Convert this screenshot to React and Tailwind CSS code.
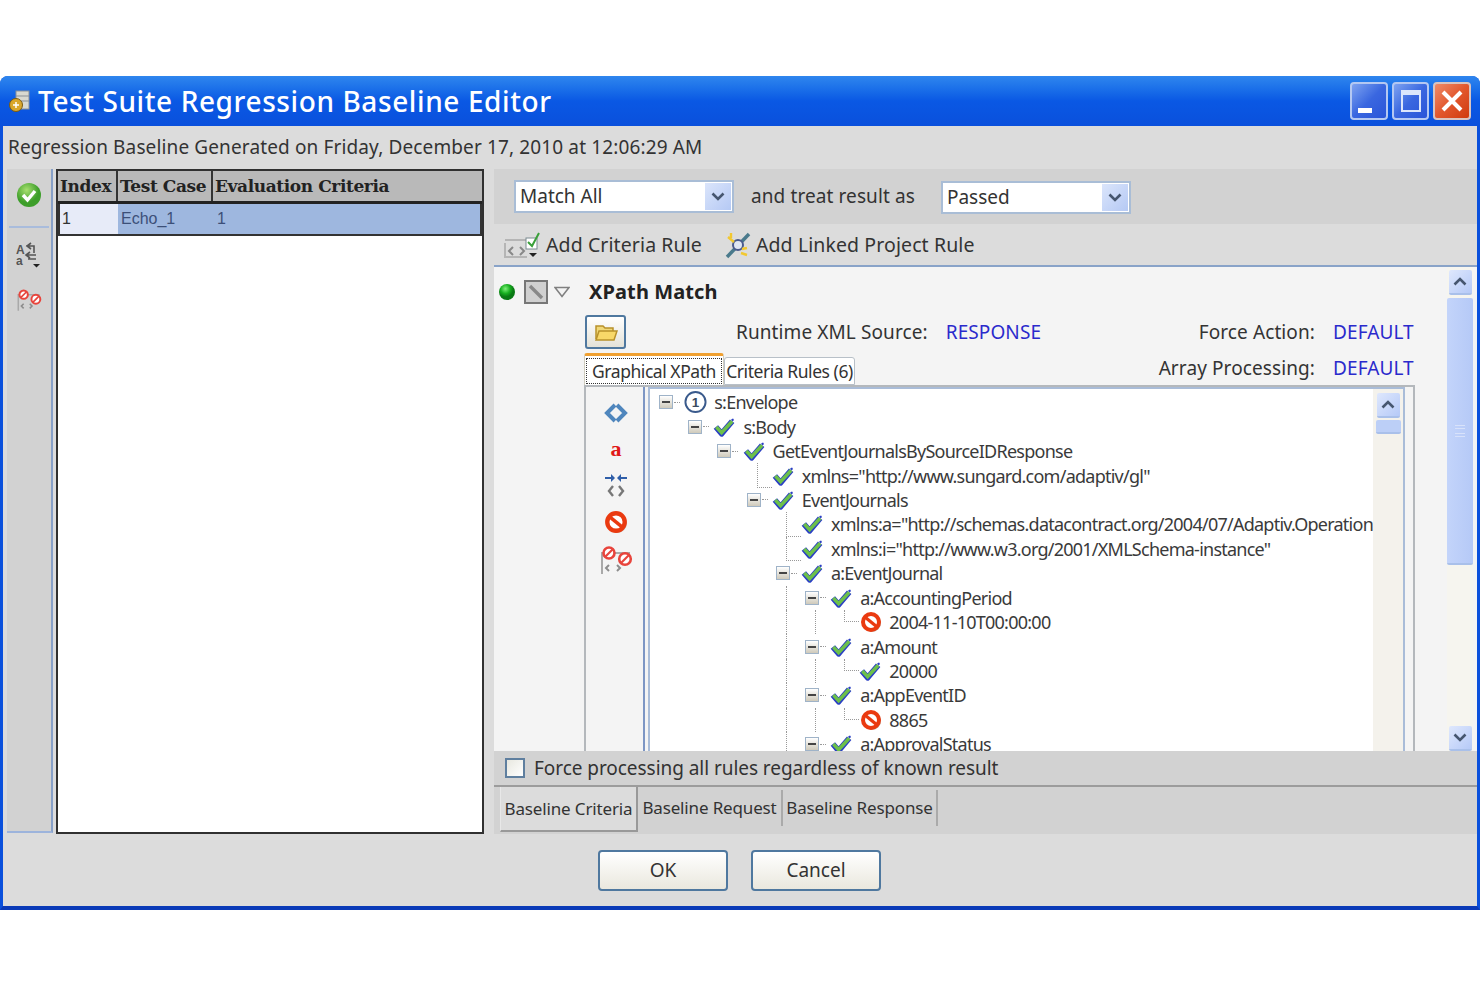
import React from "react";

const font = "font-['Noto_Sans',sans-serif]";

function Check({ className = "" }) {
  return (
    <svg width="24" height="22" viewBox="0 0 24 22" className={className}>
      <path d="M3 11l6 7L20 5" fill="none" stroke="#2a3fc4" strokeWidth="6" strokeLinejoin="round" />
      <path d="M3.5 11l5.5 6L20 5" fill="none" stroke="#6cc04a" strokeWidth="3.6" />
      <path d="M19 3l2-1 1 2-2 1z" fill="#2a3fc4" />
    </svg>
  );
}

function Stop({ size = 22 }) {
  return (
    <svg width={size} height={size} viewBox="0 0 22 22">
      <circle cx="12" cy="12" r="9" fill="#b9b2a8" />
      <circle cx="11" cy="11" r="8" fill="#fff" stroke="#ea3a10" strokeWidth="4" />
      <path d="M5.5 6.5l11 9" stroke="#ea3a10" strokeWidth="3.2" />
    </svg>
  );
}

function One() {
  return (
    <svg width="24" height="24" viewBox="0 0 24 24">
      <circle cx="12" cy="12" r="10.5" fill="#fff" stroke="#3a5a8c" strokeWidth="2" />
      <text x="12" y="17" textAnchor="middle" fontSize="14" fontWeight="700" fontFamily="Liberation Sans" fill="#3a4a60">1</text>
    </svg>
  );
}

function Toggle() {
  return (
    <span className="flex h-[14px] w-[14px] items-center justify-center border border-[#9fb3c8] bg-gradient-to-b from-white to-[#cfcabb]">
      <span className="h-[2px] w-[8px] bg-[#444]" />
    </span>
  );
}

function StopPair() {
  return (
    <svg width="34" height="30" viewBox="0 0 34 30">
      <path d="M3 29V8h28" fill="none" stroke="#a9a9a9" strokeWidth="2" />
      <path d="M10 20l-3 3 3 3M18 20l3 3-3 3" fill="none" stroke="#8d8d8d" strokeWidth="2" />
      <circle cx="10" cy="8" r="5.5" fill="#fff" stroke="#e8443c" strokeWidth="2.6" />
      <path d="M6.5 11.5l7-7" stroke="#e8443c" strokeWidth="2.2" />
      <circle cx="26" cy="14" r="5.8" fill="#fff" stroke="#e8443c" strokeWidth="2.6" />
      <path d="M22 18l8-8" stroke="#e8443c" strokeWidth="2.2" />
    </svg>
  );
}

function ScrollBtn({ down, size = "h-[25px] w-[23px]" }) {
  return (
    <div className={`flex ${size} items-center justify-center rounded-[2px] border-b-2 border-[#a9c0ea] bg-gradient-to-br from-[#dfe8fd] to-[#b5c9f7]`}>
      <svg width="14" height="9" viewBox="0 0 14 9">
        <path d={down ? "M1.5 1.5L7 7l5.5-5.5" : "M1.5 7.5L7 2l5.5 5.5"} fill="none" stroke="#46566f" strokeWidth="2.6" />
      </svg>
    </div>
  );
}

function Select({ label, className }) {
  return (
    <div className={`flex h-[33px] items-center justify-between border-2 border-[#a9bdd6] bg-white pl-[4px] pr-[1px] text-[19px] text-[#333] ${className}`}>
      <span>{label}</span>
      <span className="flex h-[27px] w-[26px] items-center justify-center bg-gradient-to-br from-[#dbe5fb] to-[#b5c9f4]">
        <svg width="14" height="9" viewBox="0 0 14 9">
          <path d="M1.5 1.5L7 7l5.5-5.5" fill="none" stroke="#46566f" strokeWidth="2.6" />
        </svg>
      </span>
    </div>
  );
}

const rows = [
  { level: 0, toggle: true, icon: "one", text: "s:Envelope", guides: [] },
  { level: 1, toggle: true, icon: "check", text: "s:Body", guides: [] },
  { level: 2, toggle: true, icon: "check", text: "GetEventJournalsBySourceIDResponse", guides: [] },
  { level: 3, icon: "check", text: 'xmlns="http://www.sungard.com/adaptiv/gl"', guides: [] },
  { level: 3, toggle: true, icon: "check", text: "EventJournals", guides: [] },
  { level: 4, icon: "check", text: 'xmlns:a="http://schemas.datacontract.org/2004/07/Adaptiv.Operations.GlobalServices.Contracts"', guides: [] },
  { level: 4, icon: "check", text: 'xmlns:i="http://www.w3.org/2001/XMLSchema-instance"', guides: [] },
  { level: 4, toggle: true, icon: "check", text: "a:EventJournal", guides: [] },
  { level: 5, toggle: true, icon: "check", text: "a:AccountingPeriod", guides: [] },
  { level: 6, icon: "stop", text: "2004-11-10T00:00:00", guides: [5] },
  { level: 5, toggle: true, icon: "check", text: "a:Amount", guides: [] },
  { level: 6, icon: "check", text: "20000", guides: [5] },
  { level: 5, toggle: true, icon: "check", text: "a:AppEventID", guides: [] },
  { level: 6, icon: "stop", text: "8865", guides: [5] },
  { level: 5, toggle: true, icon: "check", text: "a:ApprovalStatus", guides: [] },
];

function TreeRow({ row }) {
  const cells = [];
  for (let i = 0; i < row.level; i++) {
    const guide = row.guides.includes(i) || i === 4 && row.level > 4 && false;
    cells.push(
      <span key={i} className="flex h-full w-[29.2px] shrink-0 justify-center">
        {(guide || (i === 4 && row.level >= 5)) && <span className="h-full border-l border-dotted border-[#999]" />}
      </span>
    );
  }
  return (
    <div className="flex h-[24.45px] items-center whitespace-nowrap">
      {cells}
      <span className="relative flex h-full w-[29.2px] shrink-0 items-center justify-center">
        {row.toggle ? (
          <>
            <Toggle />
            <span className="ml-[1px] w-[6px] border-t border-dotted border-[#999]" />
          </>
        ) : (
          <span className="flex h-full w-full justify-end">
            <span className={`mr-[0px] mb-[12px] w-[15px] border-b border-l border-dotted border-[#999] ${row.level === 6 ? "h-[12px]" : "h-full"}`} />
          </span>
        )}
      </span>
      <span className="flex w-[23px] shrink-0 justify-center">
        {row.icon === "one" && <One />}
        {row.icon === "check" && <Check />}
        {row.icon === "stop" && <Stop />}
      </span>
      <span className="ml-[7px] text-[18px] leading-none tracking-[-0.75px] text-[#3a3a3a]">{row.text}</span>
    </div>
  );
}

export default function App() {
  return (
    <div className={`h-[987px] w-[1480px] overflow-hidden bg-white pt-[76px] ${font}`}>
      <div className="flex h-[834px] flex-col rounded-t-[8px] bg-[#0a50dc]">
        {/* title bar */}
        <div className="flex h-[50px] shrink-0 items-center rounded-t-[8px] bg-gradient-to-b from-[#2f86ee] via-[#0a58e4] to-[#0a50dc] pr-[9px] pl-[9px]">
          <svg width="22" height="26" viewBox="0 0 22 26">
            <rect x="7" y="3" width="13" height="18" fill="#d8d8d0" stroke="#8a8f95" />
            <path d="M7 8h13M7 13h13" stroke="#8a8f95" />
            <circle cx="7" cy="17" r="6.5" fill="#d9a72c" stroke="#7a5a10" />
            <path d="M4 17h6M7 14v6" stroke="#fff" strokeWidth="1.5" />
          </svg>
          <span className="ml-[7px] text-[28px] font-medium tracking-[0.6px] text-white">Test Suite Regression Baseline Editor</span>
          <div className="ml-auto flex gap-[4px]">
            <div className="flex h-[38px] w-[38px] items-end rounded-[4px] border-2 border-[#b4c8f2] bg-gradient-to-br from-[#7fa2f0] via-[#3a67e0] to-[#2a55d8] pb-[5px] pl-[6px]">
              <span className="h-[5px] w-[14px] bg-white" />
            </div>
            <div className="flex h-[38px] w-[37px] items-center justify-center rounded-[4px] border-2 border-[#b4c8f2] bg-gradient-to-br from-[#7fa2f0] via-[#3a67e0] to-[#2a55d8]">
              <span className="h-[22px] w-[20px] border-2 border-t-[5px] border-[#dce6fb]" />
            </div>
            <div className="flex h-[38px] w-[38px] items-center justify-center rounded-[4px] border-2 border-[#d9c4c0] bg-gradient-to-br from-[#ee8a68] via-[#e2572c] to-[#d03a0c]">
              <svg width="24" height="24" viewBox="0 0 24 24">
                <path d="M3 3l18 18M21 3L3 21" stroke="#fff" strokeWidth="4" />
              </svg>
            </div>
          </div>
        </div>

        {/* window body */}
        <div className="flex min-h-0 flex-1 flex-col border-x-[3px] border-b-[4px] border-x-[#0a50dc] border-b-[#0a3ab8] bg-[#dcdcdc]">
          <div className="flex h-[43px] shrink-0 items-center pl-[5px] text-[19px] tracking-[0.13px] text-[#333]">
            Regression Baseline Generated on Friday, December 17, 2010 at 12:06:29 AM
          </div>

          <div className="flex h-[666px] shrink-0">
            {/* left toolbar */}
            <div className="h-[664px] w-[50px] shrink-0 pl-[4px]">
              <div className="flex h-full flex-col items-center border-r-2 border-b-2 border-r-[#87a0c8] border-b-[#9db4dc] bg-[#d2d2d2] pt-[13px]">
                <svg width="26" height="26" viewBox="0 0 26 26">
                  <defs>
                    <radialGradient id="g" cx="0.4" cy="0.3">
                      <stop offset="0" stopColor="#a8e070" />
                      <stop offset="1" stopColor="#3d9e2a" />
                    </radialGradient>
                  </defs>
                  <circle cx="13" cy="13" r="12" fill="url(#g)" />
                  <path d="M7 13l4.5 5L19 9" fill="none" stroke="#fff" strokeWidth="3.4" />
                </svg>
                <div className="mt-[18px] h-[2px] w-[40px] bg-[#a9bcdc]" />
                <svg className="mt-[14px]" width="26" height="26" viewBox="0 0 26 26">
                  <text x="0" y="12" fontSize="12" fontWeight="700" fontFamily="Liberation Sans" fill="#555">A</text>
                  <text x="0" y="23" fontSize="12" fontWeight="700" fontFamily="Liberation Sans" fill="#555">a</text>
                  <path d="M10 4h8v7M15 1l-4 3 4 3M20 13h-9M14 10l-4 3 4 3M12 17h8" fill="none" stroke="#555" strokeWidth="1.6" />
                  <path d="M17 22h7l-3.5 3.5z" fill="#222" />
                </svg>
                <div className="mt-[20px]">
                  <svg width="26" height="24" viewBox="0 0 34 30">
                    <path d="M3 29V8h28" fill="none" stroke="#a9a9a9" strokeWidth="2" />
                    <path d="M10 20l-3 3 3 3M18 20l3 3-3 3" fill="none" stroke="#8d8d8d" strokeWidth="2" />
                    <circle cx="10" cy="8" r="5.5" fill="#fff" stroke="#e8443c" strokeWidth="2.6" />
                    <path d="M6.5 11.5l7-7" stroke="#e8443c" strokeWidth="2.2" />
                    <circle cx="26" cy="14" r="5.8" fill="#fff" stroke="#e8443c" strokeWidth="2.6" />
                    <path d="M22 18l8-8" stroke="#e8443c" strokeWidth="2.2" />
                  </svg>
                </div>
              </div>
            </div>

            {/* results table */}
            <div className="ml-[3px] h-[665px] w-[428px] shrink-0 border-2 border-[#303030] bg-white font-['Liberation_Sans',sans-serif] text-[16px]">
              <div className="flex h-[33px] border-b-[3px] border-[#222] bg-[#b9b9b9] font-['DejaVu_Serif',serif] text-[17px] leading-[30px] font-bold tracking-[-0.4px] text-[#222]">
                <div className="w-[60px] border-r-2 border-[#333] pl-[2px]">Index</div>
                <div className="w-[95px] border-r-2 border-[#333] pl-[2px]">Test Case</div>
                <div className="flex-1 pl-[2px]">Evaluation Criteria</div>
              </div>
              <div className="flex h-[32px] items-center border-2 border-t-0 border-[#333] bg-[#9eb7df] text-[#3c4f78]">
                <div className="flex h-full w-[58px] items-center bg-[#e7ebf8] pl-[2px] text-[#333]">1</div>
                <div className="w-[96px] pl-[3px]">Echo_1</div>
                <div className="pl-[3px]">1</div>
              </div>
            </div>

            {/* right panel */}
            <div className="ml-[10px] flex min-w-0 flex-1 flex-col">
              <div className="flex h-[55px] shrink-0 items-center bg-[#d2d2d2] pl-[20px] text-[#333]">
                <Select label="Match All" className="w-[220px]" />
                <span className="ml-[17px] text-[19px] tracking-[0.1px]">and treat result as</span>
                <Select label="Passed" className="mt-[2px] ml-[26px] w-[190px]" />
              </div>

              <div className="flex h-[43px] shrink-0 items-center border-b-2 border-[#89a3c8] pl-[10px] text-[19.5px] tracking-[0.1px] text-[#333]">
                <svg width="36" height="28" viewBox="0 0 36 28">
                  <path d="M1 9h22M1 12v14h22" fill="none" stroke="#b5b5b5" strokeWidth="2" />
                  <path d="M9 16l-4 4 4 4M16 16l4 4-4 4" fill="none" stroke="#888" strokeWidth="2" />
                  <rect x="22" y="7" width="11" height="11" fill="#fff" stroke="#7a8a90" />
                  <path d="M24 11l4 4 7-13" fill="none" stroke="#3aa03a" strokeWidth="2" />
                  <path d="M25 22h8l-4 4z" fill="#222" />
                </svg>
                <span className="ml-[6px]">Add Criteria Rule</span>
                <svg className="ml-[23px]" width="26" height="28" viewBox="0 0 26 28">
                  <path d="M2 26L24 3" stroke="#4a7a8c" strokeWidth="3.5" />
                  <circle cx="13" cy="14" r="5" fill="#dfe6f2" stroke="#4a5a8c" strokeWidth="2" />
                  <path d="M3 6l6 5M6 2v5M16 22l6 2M17 18l5-1" stroke="#f2c830" strokeWidth="2.4" />
                </svg>
                <span className="ml-[5px]">Add Linked Project Rule</span>
              </div>

              <div className="flex h-[484px] shrink-0 bg-[#f4f4f4]">
                <div className="flex min-w-0 flex-1 flex-col">
                  <div className="mt-[13px] flex h-[24px] shrink-0 items-center pl-[5px]">
                    <svg width="16" height="16" viewBox="0 0 16 16">
                      <defs>
                        <radialGradient id="d" cx="0.4" cy="0.3">
                          <stop offset="0" stopColor="#7ff07a" />
                          <stop offset="0.6" stopColor="#18b020" />
                          <stop offset="1" stopColor="#0a7a14" />
                        </radialGradient>
                      </defs>
                      <circle cx="8" cy="8" r="8" fill="url(#d)" />
                    </svg>
                    <span className="ml-[9px] flex h-[24px] w-[24px] items-center justify-center border-2 border-[#777] bg-[#d0d0d0]">
                      <svg width="18" height="18" viewBox="0 0 18 18">
                        <path d="M3 3l6 6 6 6" stroke="#888" strokeWidth="3.4" />
                      </svg>
                    </span>
                    <svg className="ml-[6px]" width="16" height="12" viewBox="0 0 16 12">
                      <path d="M1 1.5h14L8 10.5z" fill="#f4f4f4" stroke="#808080" strokeWidth="1.6" />
                    </svg>
                    <span className="ml-[19px] text-[20px] font-bold tracking-[0.1px] text-[#222]">XPath Match</span>
                  </div>

                  <div className="mt-[11px] flex h-[34px] shrink-0 items-center pl-[91px] text-[19px] tracking-[0.1px] text-[#333]">
                    <div className="flex h-[34px] w-[41px] items-center justify-center rounded-[3px] border-2 border-[#4f789f] bg-gradient-to-b from-white to-[#e4e2d8]">
                      <svg width="24" height="20" viewBox="0 0 24 20">
                        <path d="M2 17V4h7l2 2h8v3" fill="#f0d878" stroke="#b8912a" strokeWidth="1.5" />
                        <path d="M2 18l3-9h18l-3 9z" fill="#f8d868" stroke="#b8912a" strokeWidth="1.5" />
                      </svg>
                    </div>
                    <span className="ml-[110px]">Runtime XML Source:</span>
                    <span className="ml-[18px] text-[#2a2acc]">RESPONSE</span>
                    <span className="mr-[18px] ml-auto">Force Action:</span>
                    <span className="mr-[35px] w-[79px] text-[#2a2acc]">DEFAULT</span>
                  </div>

                  <div className="mt-[4px] flex h-[32px] shrink-0 items-end pl-[90px] text-[19px] tracking-[0.1px] text-[#333]">
                    <div className="flex h-full w-[140px] items-center justify-center rounded-t-[3px] border-x border-[#d0cdbf] border-t-[3px] border-t-[#f0a030] bg-white">
                      <span className="border border-dotted border-[#333] px-[5px] text-[17.5px] leading-[24px] tracking-[-0.45px]">Graphical XPath</span>
                    </div>
                    <div className="flex h-[28px] w-[131px] items-center justify-center rounded-t-[3px] border border-[#b8c0c8] bg-white text-[17.5px] tracking-[-0.45px]">
                      Criteria Rules (6)
                    </div>
                    <div className="mb-[1px] ml-auto flex self-center">
                      <span className="mr-[18px]">Array Processing:</span>
                      <span className="mr-[35px] w-[79px] text-[#2a2acc]">DEFAULT</span>
                    </div>
                  </div>

                  <div className="mr-[32px] ml-[90px] flex min-h-0 flex-1 border-x-2 border-t-2 border-x-[#b4b8bc] border-t-[#b4b8bc] bg-[#f4f4f4]">
                    <div className="flex h-full w-[59px] shrink-0 flex-col items-center border-r-2 border-[#7d96c4] pt-[16px] pl-[3px]">
                      <svg width="24" height="20" viewBox="0 0 24 20">
                        <path d="M11 2L3 10l8 8M13 2l8 8-8 8" fill="none" stroke="#4f86bd" strokeWidth="4" />
                      </svg>
                      <span className="mt-[14px] font-['Liberation_Serif',serif] text-[22px] leading-[24px] font-bold text-[#e01818]">a</span>
                      <svg className="mt-[12px]" width="24" height="26" viewBox="0 0 24 26">
                        <path d="M1 5h8M23 5h-8" stroke="#2f5ea8" strokeWidth="2" />
                        <path d="M7 1l4 4-4 4M17 1l-4 4 4 4z" fill="#2f5ea8" />
                        <path d="M9 13l-4 5 4 5M15 13l4 5-4 5" fill="none" stroke="#777" strokeWidth="2.4" />
                      </svg>
                      <span className="mt-[11px]">
                        <Stop size={24} />
                      </span>
                      <span className="mt-[11px]">
                        <StopPair />
                      </span>
                    </div>
                    <div className="ml-[3px] flex min-w-0 flex-1 border-x-2 border-t-2 border-x-[#a9bcd8] border-t-[#a9bcd8] bg-white mr-[8px]">
                      <div className="min-w-0 flex-1 overflow-hidden pt-[1px] pl-[5px]">
                        {rows.map((row, i) => (
                          <TreeRow key={i} row={row} />
                        ))}
                      </div>
                      <div className="flex w-[30px] shrink-0 flex-col items-center bg-[#f4f2ec] pt-[4px]">
                        <ScrollBtn />
                        <div className="mt-[2px] h-[14px] w-[25px] rounded-[2px] border-b-2 border-[#a9c0ea] bg-[#bccff7]" />
                      </div>
                    </div>
                  </div>
                </div>

                <div className="mr-[4px] flex w-[26px] shrink-0 flex-col items-center bg-[#f6f5ef] pt-[3px]">
                  <ScrollBtn />
                  <div className="mt-[3px] flex h-[267px] w-full items-center justify-center rounded-[2px] border-b-2 border-[#a9c0ea] bg-gradient-to-r from-[#c3d4fa] to-[#b5c9f7]">
                    <span className="h-[12px] w-[10px] border-y-4 border-double border-[#d8e2fa]" />
                  </div>
                  <div className="flex-1" />
                  <ScrollBtn down />
                </div>
              </div>

              <div className="flex h-[36px] shrink-0 items-center border-b-2 border-[#9c9c9c] bg-[#d2d2d2] pl-[11px] text-[19px] text-[#333]">
                <span className="h-[20px] w-[20px] border-2 border-[#5f7f9f] bg-gradient-to-br from-[#e8e8e0] to-white" />
                <span className="ml-[9px] tracking-[-0.05px]">Force processing all rules regardless of known result</span>
              </div>

              <div className="flex h-[47px] shrink-0 bg-[#d2d2d2] pl-[6px] text-[17px] tracking-[-0.15px] text-[#333]">
                <div className="flex h-[45px] w-[138px] items-center justify-center border-r-2 border-b-2 border-l border-r-[#999] border-b-[#999] border-l-[#e8e8e8] bg-[#dcdcdc]">Baseline Criteria</div>
                <div className="my-[3px] flex h-[36px] w-[145px] items-center justify-center border-r-2 border-[#aaa]">Baseline Request</div>
                <div className="my-[3px] flex h-[36px] w-[155px] items-center justify-center border-r-2 border-[#aaa]">Baseline Response</div>
              </div>
            </div>
          </div>

          <div className="flex flex-1 items-center justify-center gap-[23px] pr-[1px] pb-[1px] text-[19px] text-[#333]">
            <button className="h-[41px] w-[130px] rounded-[4px] border-2 border-[#4f789f] bg-gradient-to-b from-white to-[#eae8de]">OK</button>
            <button className="h-[41px] w-[130px] rounded-[4px] border-2 border-[#4f789f] bg-gradient-to-b from-white to-[#eae8de]">Cancel</button>
          </div>
        </div>
      </div>
    </div>
  );
}
